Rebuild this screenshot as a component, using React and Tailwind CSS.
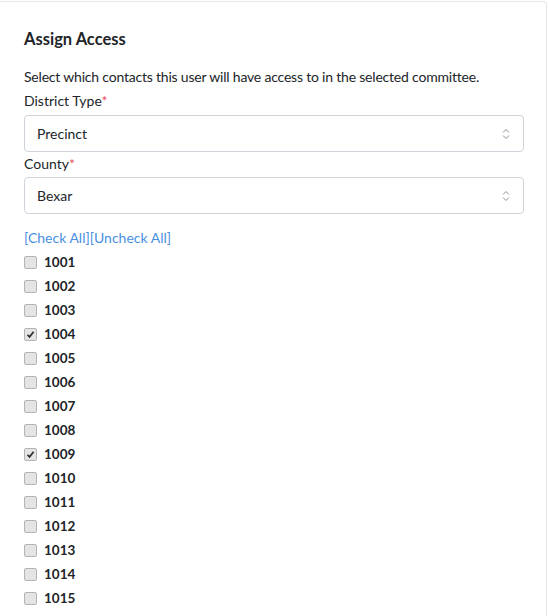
import { useState } from 'react'

const precincts = Array.from({ length: 15 }, (_, i) => String(1001 + i))

function Chevrons() {
  return (
    <svg width="8" height="12" viewBox="0 0 8 12" fill="none" stroke="#8a8f96" strokeWidth="1" className="shrink-0">
      <path d="M1 4.5 L4 1.5 L7 4.5" />
      <path d="M1 7.5 L4 10.5 L7 7.5" />
    </svg>
  )
}

function Select({ value }) {
  return (
    <div className="flex items-center justify-between h-[37px] pl-3 pr-[13px] border border-[#ced4da] rounded-[4px] bg-white text-[14px] text-[#212529]">
      <span>{value}</span>
      <Chevrons />
    </div>
  )
}

function Label({ children }) {
  return (
    <div className="text-[14px] text-[#212529] leading-[22px]">
      {children}<span className="text-[#e8505b]">*</span>
    </div>
  )
}

function Box({ on, onClick }) {
  return (
    <span
      onClick={onClick}
      className="flex items-center justify-center w-[13px] h-[13px] mr-[7px] rounded-[2px] border border-[#b4b4b4] bg-[#e4e4e4] cursor-pointer"
    >
      {on && (
        <svg width="9" height="9" viewBox="0 0 9 9" fill="none" stroke="#333" strokeWidth="1.8">
          <path d="M1.5 4.8 L3.6 6.8 L7.6 1.8" />
        </svg>
      )}
    </span>
  )
}

export default function App() {
  const [checked, setChecked] = useState(['1004', '1009'])

  const toggle = (id) =>
    setChecked((c) => (c.includes(id) ? c.filter((x) => x !== id) : [...c, id]))

  return (
    <div className="w-[548px] h-[616px] bg-white overflow-hidden font-['Lato',sans-serif]">
      <div className="mt-[1px] mr-[1px] border-t border-r border-[#e3e6ea] rounded-tr-[4px] h-full pl-6 pr-[22px] pt-[25px]">
        <h2 className="text-[16.5px] font-bold text-[#212529] leading-[24px]">Assign Access</h2>

        <p className="mt-[15px] text-[14px] tracking-[-0.2px] text-[#212529] leading-[22px]">
          Select which contacts this user will have access to in the selected committee.
        </p>

        <div className="mt-[2px] mb-[3px]">
          <Label>District Type</Label>
        </div>
        <Select value="Precinct" />

        <div className="mt-[1px] mb-[2px]">
          <Label>County</Label>
        </div>
        <Select value="Bexar" />

        <div className="mt-[14px] text-[14px] leading-[20px] text-[#4a90e2]">
          <a href="#">[Check All]</a>
          <a href="#">[Uncheck All]</a>
        </div>

        <ul className="mt-[2px]">
          {precincts.map((p) => (
            <li key={p} className="flex items-center h-[24px]">
              <Box on={checked.includes(p)} onClick={() => toggle(p)} />
              <span className="text-[13.5px] font-bold text-[#212529]">{p}</span>
            </li>
          ))}
        </ul>
      </div>
    </div>
  )
}
